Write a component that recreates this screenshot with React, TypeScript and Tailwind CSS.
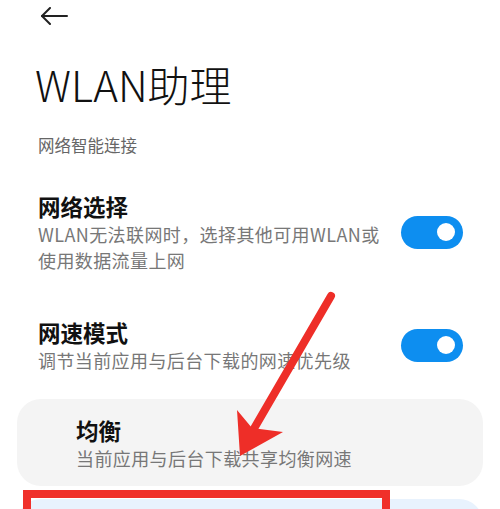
import React from "react";

const font = { fontFamily: '"Noto Sans CJK SC", "Noto Sans", sans-serif' };

function Toggle() {
  return (
    <div className="w-[62px] h-[33px] rounded-full bg-[#0d8ef0] flex items-center justify-end pr-[8px] shrink-0">
      <div className="w-[18px] h-[18px] rounded-full bg-white" />
    </div>
  );
}

export default function App() {
  return (
    <div className="relative w-[500px] h-[509px] overflow-hidden bg-white text-[#111]" style={font}>
      <div className="pl-[40px] pt-[7px] h-[20px]">
        <svg width="28" height="18" viewBox="0 0 28 18" fill="none" stroke="#222" strokeWidth="2" strokeLinecap="round" strokeLinejoin="round">
          <path d="M2 9 H27" />
          <path d="M10 1 L2 9 L10 17" />
        </svg>
      </div>
      <div className="pl-[35px] mt-[40px] text-[42px] leading-[48px] font-light">WLAN助理</div>
      <div className="pl-[38px] mt-[26px] text-[16.5px] leading-[22px] text-[#666]">网络智能连接</div>

      <div className="flex items-center justify-between pl-[38px] pr-[37px] mt-[35px]">
        <div>
          <div className="text-[22.5px] leading-[30px] font-bold">网络选择</div>
          <div className="text-[18px] leading-[26px] tracking-[0.4px] text-[#777]">
            WLAN无法联网时，选择其他可用WLAN或
            <br />
            使用数据流量上网
          </div>
        </div>
        <Toggle />
      </div>

      <div className="flex items-center justify-between pl-[38px] pr-[37px] mt-[44px]">
        <div>
          <div className="text-[22.5px] leading-[30px] font-bold">网速模式</div>
          <div className="text-[18px] leading-[26px] tracking-[0.4px] text-[#777]">调节当前应用与后台下载的网速优先级</div>
        </div>
        <Toggle />
      </div>

      <div className="mx-[17px] mt-[26px] h-[87px] rounded-[24px] bg-[#f4f4f4] pl-[59px] pt-[16px]">
        <div className="text-[22.5px] leading-[30px] font-bold">均衡</div>
        <div className="text-[18px] leading-[26px] tracking-[0.4px] text-[#777]">当前应用与后台下载共享均衡网速</div>
      </div>

      <div className="relative mx-[17px] mt-[13px] h-[80px] rounded-[24px] bg-[#e8f2fd]">
        <div className="absolute left-[6px] top-[-9px] w-[367px] h-[90px] border-[8px] border-[#f0302a]" />
      </div>

      <svg className="absolute left-0 top-0" width="500" height="509" viewBox="0 0 500 509">
        <line x1="331" y1="296" x2="252" y2="432" stroke="#ee2e28" strokeWidth="8" strokeLinecap="round" />
        <polygon points="240,456 237,410 252,428 283,432" fill="#ee2e28" />
      </svg>
    </div>
  );
}
